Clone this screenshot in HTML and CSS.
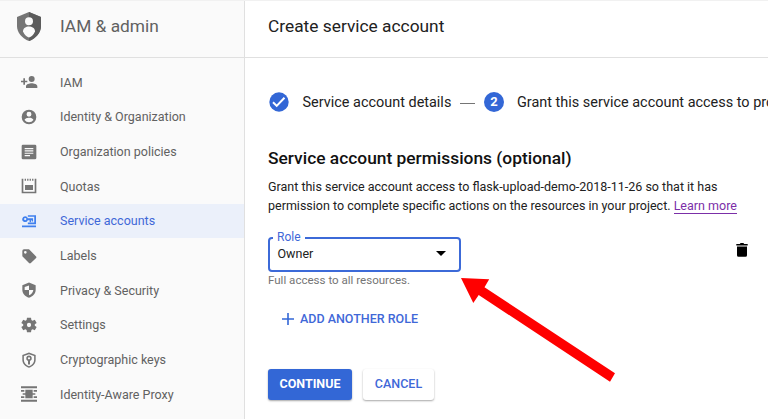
FILE: index.html
```
<!DOCTYPE html>
<html lang="en">
<head>
<meta charset="utf-8">
<title>IAM &amp; admin</title>
<link rel="stylesheet" href="styles.css">
</head>
<body>
<div class="app">
  <aside class="sidebar">
    <div class="product">
      <svg class="product-icon" viewBox="0 0 24 29"><path fill="#757575" d="M12 0 0 5v9c0 6.500 5 12.500 12 15 7-2.500 12-8.500 12-15V5z"/><path fill="#5c5c5c" d="M12 0v29c7-2.500 12-8.500 12-15V5z"/><circle cx="12" cy="9.300" r="4" fill="#fafafa"/><path fill="#fafafa" d="M6 19.500c0-3.600 3-5 6-5s6 1.400 6 5c-1.400 3.500-3.600 5.300-6 6-2.400-.7-4.600-2.500-6-6z"/></svg>
      <span class="product-name">IAM &amp; admin</span>
    </div>
    <nav class="nav">
      <a class="item"><svg class="icon" viewBox="0 0 24 24"><path d="M16 12a4.500 4.500 0 1 0 0-9 4.500 4.500 0 0 0 0 9zM6 10V6.500H3.500V10H0v2.500h3.500V16H6v-3.500h3.500V10zM16 14c-3 0-8.500 1.300-8.500 4.500V21H24.500v-2.500C24.500 15.300 19 14 16 14z"/></svg><span>IAM</span></a>
      <a class="item"><svg class="icon" viewBox="0 0 24 24"><path d="M12 1a11 11 0 1 0 0 22 11 11 0 0 0 0-22zm0 3.300a3.700 3.700 0 1 1 0 7.400 3.700 3.700 0 0 1 0-7.400zm0 15.600a8 8 0 0 1-6.600-3.500c0-2.200 4.400-3.400 6.600-3.400s6.600 1.200 6.600 3.400A8 8 0 0 1 12 19.900z"/></svg><span>Identity &amp; Organization</span></a>
      <a class="item"><svg class="icon" viewBox="0 0 24 24"><path fill-rule="evenodd" d="M3 1h18a2 2 0 0 1 2 2v18a2 2 0 0 1-2 2H3a2 2 0 0 1-2-2V3a2 2 0 0 1 2-2zm2.500 5v1.700h13V6zm0 3.500v1.700h13V9.500zm0 3.500v1.700h13V13zm0 3.500v1.700h8v-1.700z"/></svg><span>Organization policies</span></a>
      <a class="item"><svg class="icon" viewBox="0 0 24 24"><path d="M1 1h2.500v19.500h17V1H23v22H1zM6 10.500h12V18H6zM5.500 1h2v3h-2zm3.700 0h2v3h-2zm3.700 0h2v3h-2zm3.700 0h2v3h-2z"/></svg><span>Quotas</span></a>
      <a class="item active"><svg class="icon" viewBox="0 0 24 24"><path d="M0 19.500h24V22.500H0zM10 2h14V17.500H10v-2.800h11V4.800H10z"/><path fill-rule="evenodd" d="M5.500 3.700a5 5 0 1 0 4.500 6.800h3v3.500h2.400v-3.500h1.300v2.500H19V7.200h-9a5 5 0 0 0-4.500-3.500zm0 3a2 2 0 1 1 0 4 2 2 0 0 1 0-4z"/></svg><span>Service accounts</span></a>
      <a class="item"><svg class="icon" viewBox="0 0 24 24"><path fill-rule="evenodd" d="M2 4.500A2.500 2.500 0 0 1 4.500 2H12l10.300 10.300a2 2 0 0 1 0 3l-7.500 7.200a2 2 0 0 1-2.800 0L2 12.500zm4.500 0a2 2 0 1 0 0 4 2 2 0 0 0 0-4z"/></svg><span>Labels</span></a>
      <a class="item"><svg class="icon" viewBox="0 0 24 24"><path fill-rule="evenodd" d="M12 .7 2 5v7c0 5.300 4.300 10 10 11.500C17.700 22 22 17.300 22 12V5zm0 4.500V12h6.500c-.5 3.500-3 6.500-6.500 8v-8H5.500V7.500z"/></svg><span>Privacy &amp; Security</span></a>
      <a class="item"><svg class="icon" viewBox="0 0 24 24"><path fill-rule="evenodd" d="M9 1h6l.6 3.600 1.700 1L20.700 4l2.800 5-2.800 2v2l2.800 2-2.800 5-3.400-1.500-1.700 1L15 23H9l-.6-3.500-1.700-1L3.300 20 .5 15l2.800-2v-2L.5 9l2.800-5 3.400 1.600 1.700-1zm3 7.800a3.200 3.200 0 1 0 0 6.400 3.200 3.200 0 0 0 0-6.400z"/></svg><span>Settings</span></a>
      <a class="item"><svg class="icon" viewBox="0 0 24 24"><path fill-rule="evenodd" d="M12 .7 2 4.500V12c0 5.300 4.300 10 10 11.500C17.700 22 22 17.300 22 12V4.500zm0 2.500L19.700 6v6c0 4.200-3.200 7.700-7.700 9.200C7.500 19.700 4.300 16.200 4.300 12V6z"/><path fill-rule="evenodd" d="M12 5.200a4.300 4.300 0 0 0-1.500 8.300v5.300h3v-5.300A4.300 4.300 0 0 0 12 5.200zm0 2.500a1.700 1.700 0 1 1 0 3.400 1.700 1.700 0 0 1 0-3.400z"/></svg><span>Cryptographic keys</span></a>
      <a class="item"><svg class="icon" viewBox="0 0 24 24"><path d="M0 .5h24V3.300H0zM0 20.700h24v2.800H0zM6.500 5.500h11v13h-11zM0 6h5v2.500H0zM0 15.500h5V18H0zM19 6h5v2.500h-5zM19 15.500h5V18h-5zM2.500 10.700h19v2.600h-19z"/></svg><span>Identity-Aware Proxy</span></a>
    </nav>
  </aside>
  <main class="main">
    <header class="header"><h1 class="title">Create service account</h1></header>
    <div class="content">
      <div class="steps">
        <svg class="badge" viewBox="0 0 20 20"><circle cx="10" cy="10" r="9.700" fill="#3367d6"/><path d="m4 10.300 3.700 3.600L15.500 5.700" fill="none" stroke="#fff" stroke-width="2"/></svg>
        <span class="step-name s1">Service account details</span>
        <span class="dash"></span>
        <span class="badge number">2</span>
        <span class="step-name s2">Grant this service account access to project</span>
      </div>
      <h2 class="section">Service account permissions (optional)</h2>
      <p class="desc">Grant this service account access to flask-upload-demo-2018-11-26 so that it has<br>permission to complete specific actions on the resources in your project. <a class="link">Learn more</a></p>
      <div class="role-row">
        <div class="select">
          <span class="select-label">Role</span>
          <span class="select-value">Owner</span>
          <svg class="caret" viewBox="0 0 10 5"><path d="M0 0h10L5 5z"/></svg>
        </div>
        <svg class="trash" viewBox="0 0 12 14"><path d="M.3 1h3.500l.8-1h2.800l.8 1h3.500v1.500H.3zM1 3.500h10v8.700A1.500 1.500 0 0 1 9.500 13.700h-7A1.500 1.500 0 0 1 1 12.200z"/></svg>
      </div>
      <div class="hint">Full access to all resources.</div>
      <button class="add"><svg class="plus" viewBox="0 0 12 12"><path d="M5.200 0h1.600v5.200H12v1.600H6.800V12H5.200V6.800H0V5.200h5.200z"/></svg><span>ADD ANOTHER ROLE</span></button>
      <div class="actions"><button class="btn primary">CONTINUE</button><button class="btn plain">CANCEL</button></div>
    </div>
    <svg class="pointer" viewBox="0 0 154 104"><path fill="#f00" d="M0 0 28.200 1.300 23.500 9.200 154 95.300 149 103.700 17.700 17 12.300 25z"/></svg>
  </main>
</div>
</body>
</html>
```
FILE: styles.css
```
* { box-sizing: border-box; }
body { margin: 0; font-family: Roboto, "Liberation Sans", sans-serif; color: #212121; background: #fff; overflow: hidden; }
h1, h2, p { margin: 0; font-weight: 400; }
button { font-family: inherit; border: 0; background: none; padding: 0; }
.app { display: flex; width: 768px; height: 419px; border-top: 1px solid #f1f1f1; overflow: hidden; }
.sidebar { width: 245px; flex: none; background: #fafafa; border-right: 1px solid #e0e0e0; }
.product { height: 57px; padding: 0 0 6px 17px; display: flex; align-items: center; border-bottom: 1px solid #e0e0e0; }
.product-icon { width: 24px; height: 29px; margin-right: 19px; }
.product-name { font-size: 17.330px; color: #616161; white-space: nowrap; }
.nav { padding-top: 7px; }
.item { height: 34.670px; display: flex; align-items: center; padding-left: 21px; font-size: 12.500px; color: #616161; white-space: nowrap; }
.icon { width: 16px; height: 16px; margin-right: 23px; fill: #757575; overflow: visible; }
.active { background: #ebf0fa; color: #3f68d8; }
.active .icon { width: 14px; height: 14px; margin: 0 24px 0 1px; fill: #4080ee; }
.main { position: relative; flex: 1; min-width: 0; }
.header { height: 57px; padding: 0 0 6px 23px; display: flex; align-items: center; border-bottom: 1px solid #e0e0e0; }
.title { font-size: 17.330px; white-space: nowrap; }
.content { padding: 33px 0 0 23px; }
.steps { display: flex; align-items: center; height: 22px; white-space: nowrap; overflow: hidden; }
.badge { width: 20px; height: 20px; flex: none; margin-left: 1px; }
.number { margin: 0 0 0 9px; background: #3367d6; border-radius: 50%; color: #fff; font-weight: 700; font-size: 13px; line-height: 20px; text-align: center; }
.step-name { font-size: 14.450px; margin-left: 13.500px; padding-top: 1px; }
.s1 { width: 148.500px; flex: none; }
.s2 { margin-left: 13px; }
.dash { width: 15px; height: 1px; background: #757575; margin: 2px 0 0 9px; flex: none; }
.section { margin-top: 33px; font-size: 17.360px; line-height: 24px; font-weight: 500; color: #111; white-space: nowrap; }
.desc { margin-top: 7px; font-size: 12.500px; line-height: 19.300px; white-space: nowrap; }
.link { color: #7b2fa8; border-bottom: 1px solid #7b2fa8; }
.role-row { display: flex; margin-top: 21px; height: 35px; align-items: flex-start; }
.select { position: relative; width: 193px; height: 35px; border: 2px solid #3c6ad8; border-radius: 4px; display: flex; align-items: center; justify-content: space-between; padding: 0 13px 1px 7.500px; font-size: 12.500px; }
.select-label { position: absolute; left: 3px; top: -9px; padding: 0 4px; background: #fff; color: #3f68d8; font-size: 12px; line-height: 14px; }
.caret { width: 10px; height: 5px; }
.trash { width: 12px; height: 14px; margin: 6px 0 0 275px; }
.hint { margin-top: 0; font-size: 11.550px; line-height: 16px; color: #757575; }
.add { display: flex; align-items: center; margin: 22px 0 0 14px; height: 18px; color: #3f68d8; font-size: 12.500px; font-weight: 500; }
.plus { width: 12px; height: 12px; margin-right: 6px; fill: #3367d6; }
.actions { display: flex; gap: 11px; margin-top: 41px; }
.btn { height: 31px; padding-bottom: 2px; border-radius: 3px; font-size: 12.500px; font-weight: 500; box-shadow: 0 1px 2px rgba(0,0,0,.35); }
.primary { width: 84px; background: #3367d6; color: #fff; font-weight: 700; }
.plain { width: 71px; background: #fff; color: #3f68d8; }
.pointer { position: absolute; left: 216px; top: 277px; width: 154px; height: 104px; overflow: visible; }
```
